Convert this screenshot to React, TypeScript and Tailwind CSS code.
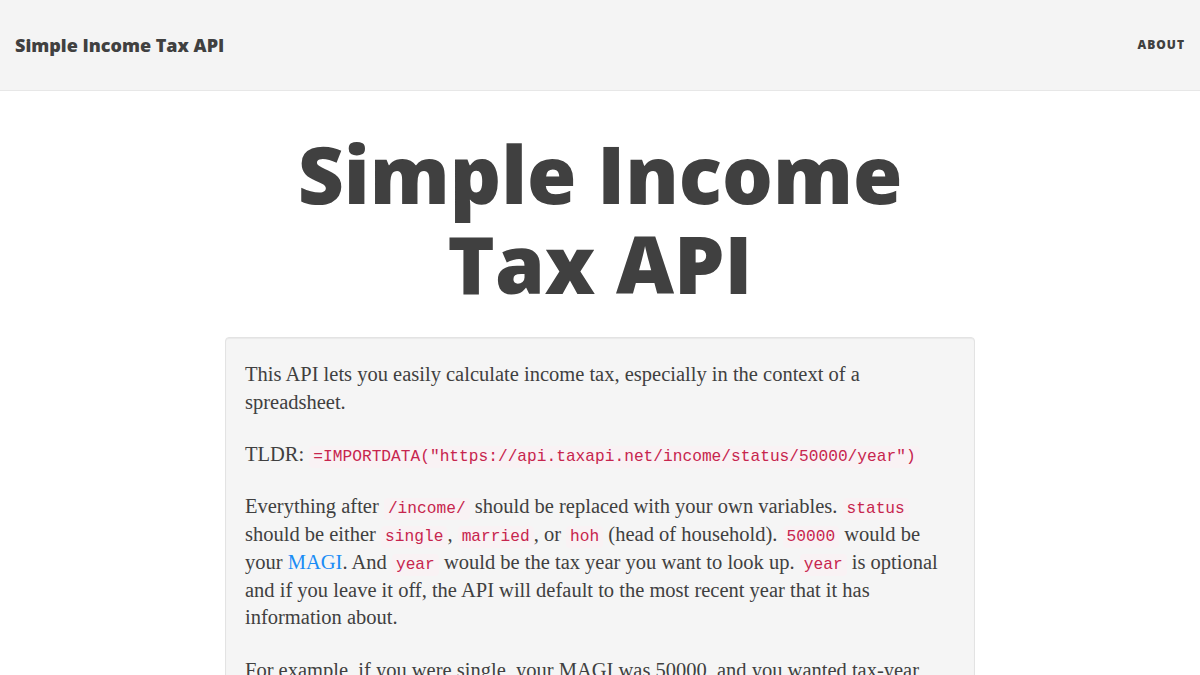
function Code({ children }: { children: React.ReactNode }) {
  return (
    <code className="rounded-[4px] bg-[#f9f2f4] px-[4px] py-[2px] font-['Liberation_Mono',monospace] text-[16.2px] leading-none text-[#c7254e]">
      {children}
    </code>
  );
}

function Line({ children }: { children: React.ReactNode }) {
  return <span className="block whitespace-nowrap">{children}</span>;
}

export default function App() {
  return (
    <div className="min-h-screen bg-white text-[#404040]">
      {/* Navbar */}
      <nav className="flex h-[91px] items-center justify-between border-b border-[#e7e7e7] bg-[#f4f4f4] px-[15px]">
        <a href="#" className="font-['Open_Sans',sans-serif] text-[18px] font-extrabold text-[#404040]">
          Simple Income Tax API
        </a>
        <a
          href="#"
          className="font-['Open_Sans',sans-serif] text-[12px] font-extrabold uppercase tracking-[1px] text-[#404040]"
        >
          About
        </a>
      </nav>

      <main className="mx-auto w-[750px] pt-[37px]">
        <h1 className="text-center font-['Open_Sans',sans-serif] text-[80px] font-extrabold leading-[90px] text-[#404040]">
          Simple Income Tax API
        </h1>

        {/* Well */}
        <div className="mt-[29px] rounded-[4px] border border-[#e3e3e3] bg-[#f5f5f5] px-[19px] pt-[23px] pb-[19px] font-['Liberation_Serif',serif] text-[20.5px] leading-[27.75px] shadow-[inset_0_1px_1px_rgba(0,0,0,0.05)]">
          <p className="mb-[24.5px]">
            <Line>This API lets you easily calculate income tax, especially in the context of a</Line>
            <Line>spreadsheet.</Line>
          </p>
          <p className="mb-[24.5px]">
            <Line>
              TLDR: <Code>=IMPORTDATA("https://api.taxapi.net/income/status/50000/year")</Code>
            </Line>
          </p>
          <p className="mb-[24.5px]">
            <Line>
              Everything after <Code>/income/</Code> should be replaced with your own variables.{' '}
              <Code>status</Code>
            </Line>
            <Line>
              should be either <Code>single</Code>, <Code>married</Code>, or <Code>hoh</Code> (head of
              household). <Code>50000</Code> would be
            </Line>
            <Line>
              your{' '}
              <a href="#" className="text-[#1a8cf5]">
                MAGI
              </a>
              . And <Code>year</Code> would be the tax year you want to look up. <Code>year</Code> is
              optional
            </Line>
            <Line>and if you leave it off, the API will default to the most recent year that it has</Line>
            <Line>information about.</Line>
          </p>
          <p className="mb-[24.5px]">
            <Line>For example, if you were single, your MAGI was 50000, and you wanted tax-year</Line>
            <Line>
              2017, you would use: <Code>=IMPORTDATA("https://api.taxapi.net/income/single/50000/2017")</Code>
            </Line>
          </p>
        </div>
      </main>
    </div>
  );
}
